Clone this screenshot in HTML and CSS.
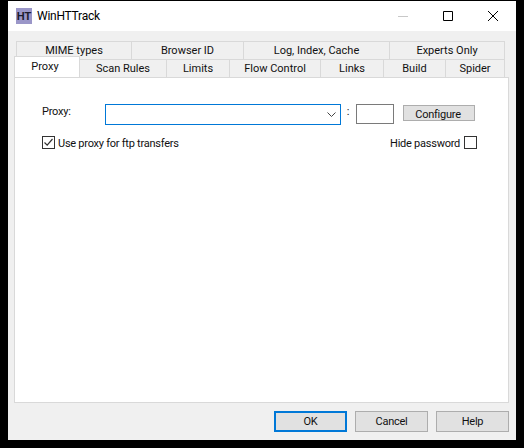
FILE: index.html
```html
<!DOCTYPE html>
<html lang="en">

<head>
    <meta charset="UTF-8" />
    <title>WinHTTrack</title>
    <link rel="stylesheet" href="styles.css">
</head>

<body>
    <div class="window">
        <div class="titlebar">
            <div class="app-icon">HT</div>
            <div class="app-title">WinHTTrack</div>
            <div class="win-controls">
                <svg class="win-btn" viewBox="0 0 10 10"><path d="M0 5.5h10" stroke="#c8c8c8" /></svg>
                <svg class="win-btn" viewBox="0 0 10 10"><path d="M.5.5h9v9h-9z" fill="none" stroke="#000" /></svg>
                <svg class="win-btn" viewBox="0 0 10 10"><path d="M0 0l10 10M10 0L0 10" stroke="#000" /></svg>
            </div>
        </div>

        <div class="dialog">
            <div class="tab-row">
                <div class="tab tab-mime">MIME types</div>
                <div class="tab tab-browser">Browser ID</div>
                <div class="tab tab-log">Log, Index, Cache</div>
                <div class="tab tab-experts">Experts Only</div>
            </div>
            <div class="tab-row tab-row-front">
                <div class="tab tab-proxy active">Proxy</div>
                <div class="tab tab-scan">Scan Rules</div>
                <div class="tab tab-limits">Limits</div>
                <div class="tab tab-flow">Flow Control</div>
                <div class="tab tab-links">Links</div>
                <div class="tab tab-build">Build</div>
                <div class="tab tab-spider">Spider</div>
            </div>

            <div class="panel">
                <div class="proxy-row">
                    <label class="proxy-label">Proxy:</label>
                    <div class="combo">
                        <svg class="combo-arrow" viewBox="0 0 9 5"><path d="M.5.5l4 4 4-4" fill="none" stroke="#444" /></svg>
                    </div>
                    <span class="colon">:</span>
                    <div class="port"></div>
                    <button class="btn-configure">Configure</button>
                </div>
                <div class="options-row">
                    <div class="check-item">
                        <span class="checkbox">
                            <svg viewBox="0 0 11 11"><path d="M1.5 5.5L4.2 8.2 9.5 2" fill="none" stroke="#333" stroke-width="1.2" /></svg>
                        </span>
                        <span class="check-text">Use proxy for ftp transfers</span>
                    </div>
                    <div class="check-item hide-password">
                        <span class="check-text">Hide password</span>
                        <span class="checkbox"></span>
                    </div>
                </div>
            </div>

            <div class="button-row">
                <button class="btn default">OK</button>
                <button class="btn">Cancel</button>
                <button class="btn">Help</button>
            </div>
        </div>
    </div>
</body>

</html>
```

FILE: styles.css
```css
body {
    margin: 0;
    background-color: #000;
    font-family: Roboto, "Liberation Sans", sans-serif;
    font-size: 11px;
    letter-spacing: -0.25px;
    color: #111;
}

.window {
    margin: 1px 8px 8px 8px;
    height: 439px;
    display: flex;
    flex-direction: column;
    background-color: #f0f0f0;
}

.titlebar {
    height: 30px;
    flex: none;
    display: flex;
    align-items: center;
    padding-left: 8px;
    background-color: #fff;
}

.app-icon {
    width: 16px;
    height: 16px;
    background-color: #9a96c8;
    color: #1c1c2c;
    font-family: "Liberation Sans", sans-serif;
    font-size: 11px;
    font-weight: bold;
    letter-spacing: 0;
    line-height: 16px;
    text-align: center;
}

.app-title {
    margin-left: 5px;
    font-size: 12px;
    color: #000;
}

.win-controls {
    margin-left: auto;
    display: flex;
    gap: 35px;
    padding-right: 18px;
}

.win-btn {
    width: 10px;
    height: 10px;
}

.dialog {
    flex: 1;
    display: flex;
    flex-direction: column;
    padding: 10px 7px 0 6px;
}

.tab-row {
    display: flex;
    height: 18px;
    margin-left: 2px;
}

.tab {
    box-sizing: border-box;
    height: 18px;
    border: 1px solid #d9d9d9;
    border-right: none;
    border-bottom: none;
    text-align: center;
    letter-spacing: 0;
    line-height: 17px;
}

.tab:last-child {
    border-right: 1px solid #d9d9d9;
}

.tab-mime { width: 115px; }
.tab-browser { width: 112px; }
.tab-log { width: 146px; }
.tab-experts { width: 116px; }

.tab-proxy { width: 66px; }
.tab-scan { width: 86px; }
.tab-limits { width: 63px; }
.tab-flow { width: 91px; }
.tab-links { width: 63px; }
.tab-build { width: 62px; }
.tab-spider { width: 60px; }

.tab.active {
    position: relative;
    z-index: 1;
    height: 21px;
    margin: -3px 0 -1px -2px;
    background-color: #fff;
    border-right: 1px solid #d9d9d9;
    line-height: 19px;
    padding-right: 4px;
}

.tab.active + .tab {
    border-left: none;
}

.panel {
    flex: 1;
    box-sizing: border-box;
    border: 1px solid #d9d9d9;
    background-color: #fff;
    padding: 26px 31px 0 27px;
}

.proxy-row {
    display: flex;
    align-items: flex-start;
}

.proxy-label {
    width: 63px;
    line-height: 16px;
}

.combo {
    box-sizing: border-box;
    width: 236px;
    height: 21px;
    border: 1px solid #0078d7;
    background-color: #fff;
    display: flex;
    align-items: center;
    justify-content: flex-end;
    padding-right: 4px;
}

.combo-arrow {
    width: 9px;
    height: 5px;
}

.colon {
    width: 14px;
    text-align: center;
    line-height: 16px;
    margin-right: 1px;
}

.port {
    box-sizing: border-box;
    width: 38px;
    height: 20px;
    border: 1px solid #7a7a7a;
}

.btn-configure {
    box-sizing: border-box;
    width: 72px;
    height: 16px;
    margin: 1px 0 0 9px;
    padding: 3px 2px 0 0;
    border: 1px solid #adadad;
    background-color: #e1e1e1;
    font: inherit;
    letter-spacing: inherit;
    color: inherit;
    line-height: 11px;
}

.options-row {
    display: flex;
    justify-content: space-between;
    margin-top: 10px;
}

.check-item {
    display: flex;
    align-items: flex-start;
    gap: 3px;
}

.check-text {
    line-height: 17px;
}

.hide-password {
    gap: 4px;
}

.checkbox {
    box-sizing: border-box;
    width: 13px;
    height: 13px;
    margin-top: 1px;
    border: 1px solid #333;
    background-color: #fff;
    display: block;
}

.checkbox svg {
    display: block;
    width: 11px;
    height: 11px;
}

.button-row {
    display: flex;
    justify-content: flex-end;
    gap: 8px;
    margin: 8px 0 0 0;
    height: 29px;
}

.btn {
    box-sizing: border-box;
    width: 73px;
    height: 21px;
    padding: 0;
    border: 1px solid #adadad;
    background-color: #e1e1e1;
    font: inherit;
    letter-spacing: inherit;
    color: inherit;
}

.btn.default {
    border: 2px solid #0078d7;
}
```
